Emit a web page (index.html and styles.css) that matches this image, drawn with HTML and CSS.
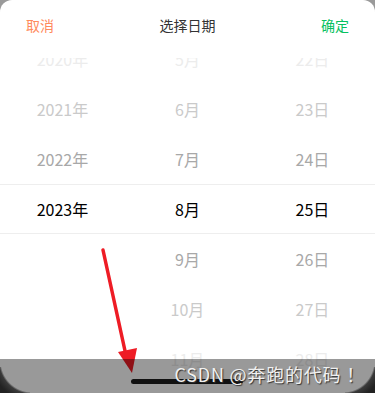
FILE: index.html
```html
<!DOCTYPE html>
<html lang="zh-CN">
<head>
  <meta charset="UTF-8">
  <meta name="viewport" content="width=device-width, initial-scale=1.0">
  <title>选择日期</title>
  <link rel="stylesheet" href="styles.css">
</head>
<body>
  <div class="sheet">
    <div class="header">
      <span class="cancel">取消</span>
      <span class="title">选择日期</span>
      <span class="confirm">确定</span>
    </div>

    <div class="picker">
      <div class="columns">
        <div class="col">
          <div class="item far3">2020年</div>
          <div class="item far2">2021年</div>
          <div class="item near">2022年</div>
          <div class="item active">2023年</div>
        </div>
        <div class="col">
          <div class="item far3">5月</div>
          <div class="item far2">6月</div>
          <div class="item near">7月</div>
          <div class="item active">8月</div>
          <div class="item near">9月</div>
          <div class="item far2">10月</div>
          <div class="item far3">11月</div>
        </div>
        <div class="col">
          <div class="item far3">22日</div>
          <div class="item far2">23日</div>
          <div class="item near">24日</div>
          <div class="item active">25日</div>
          <div class="item near">26日</div>
          <div class="item far2">27日</div>
          <div class="item far3">28日</div>
        </div>
      </div>
      <div class="indicator"></div>
    </div>
  </div>

  <svg class="arrow" width="375" height="393" viewBox="0 0 375 393">
    <line x1="103" y1="250" x2="127" y2="360" stroke="#ee1c25" stroke-width="3.5" stroke-linecap="round"/>
    <polygon points="118,352 137,348 132,373" fill="#ee1c25"/>
  </svg>

  <div class="bottom-mask">
    <div class="home-bar"></div>
    <span class="watermark">CSDN @奔跑的代码 ！</span>
  </div>
</body>
</html>
```

FILE: styles.css
```css
* {
  box-sizing: border-box;
}

body {
  margin: 0;
  width: 375px;
  height: 393px;
  overflow: hidden;
  background-color: #9a9a9a;
  font-family: "Noto Sans CJK SC", "Noto Sans", sans-serif;
  position: relative;
}

.sheet {
  background-color: white;
  height: 393px;
  border-radius: 12px 12px 0 0;
  overflow: hidden;
}

.header {
  height: 50px;
  padding: 0 26px;
  display: flex;
  align-items: center;
  justify-content: space-between;
  font-size: 14px;
}

.cancel {
  color: #ff8a5c;
}

.title {
  color: #333;
}

.confirm {
  color: #07c160;
}

.picker {
  margin-top: 8px;
  height: 335px;
  overflow: hidden;
  position: relative;
}

.columns {
  display: flex;
  margin-top: -24px;
}

.col {
  flex: 1;
}

.item {
  height: 50px;
  display: flex;
  align-items: center;
  justify-content: center;
  font-size: 16px;
}

.item.active {
  color: #000;
}

.item.near {
  color: #a8a8a8;
}

.item.far2 {
  color: #cacaca;
}

.item.far3 {
  color: #ececec;
}

.indicator {
  position: absolute;
  left: 0;
  right: 0;
  top: 126px;
  height: 50px;
  border-top: 1px solid #eeeeee;
  border-bottom: 1px solid #eeeeee;
  pointer-events: none;
}

.arrow {
  position: absolute;
  left: 0;
  top: 0;
}

.bottom-mask {
  position: absolute;
  left: 0;
  right: 0;
  bottom: 0;
  height: 34px;
  background-color: rgba(0, 0, 0, 0.4);
}

.bottom-mask::before,
.bottom-mask::after {
  content: "";
  position: absolute;
  bottom: 0;
  width: 30px;
  height: 26px;
}

.bottom-mask::before {
  left: 0;
  background: radial-gradient(circle at 32px -6px, transparent 31px, #3a3a3a 33px, #222 40px);
}

.bottom-mask::after {
  right: 0;
  background: radial-gradient(circle at -2px -6px, transparent 31px, #3a3a3a 33px, #222 40px);
}

.home-bar {
  position: absolute;
  left: 131px;
  top: 20px;
  width: 112px;
  height: 5px;
  border-radius: 3px;
  background-color: #111;
}

.watermark {
  position: absolute;
  right: 10px;
  top: 2px;
  font-size: 18px;
  color: #f0f0f0;
  text-shadow: 1px 1px 1px #333;
  letter-spacing: 0.8px;
}
```
